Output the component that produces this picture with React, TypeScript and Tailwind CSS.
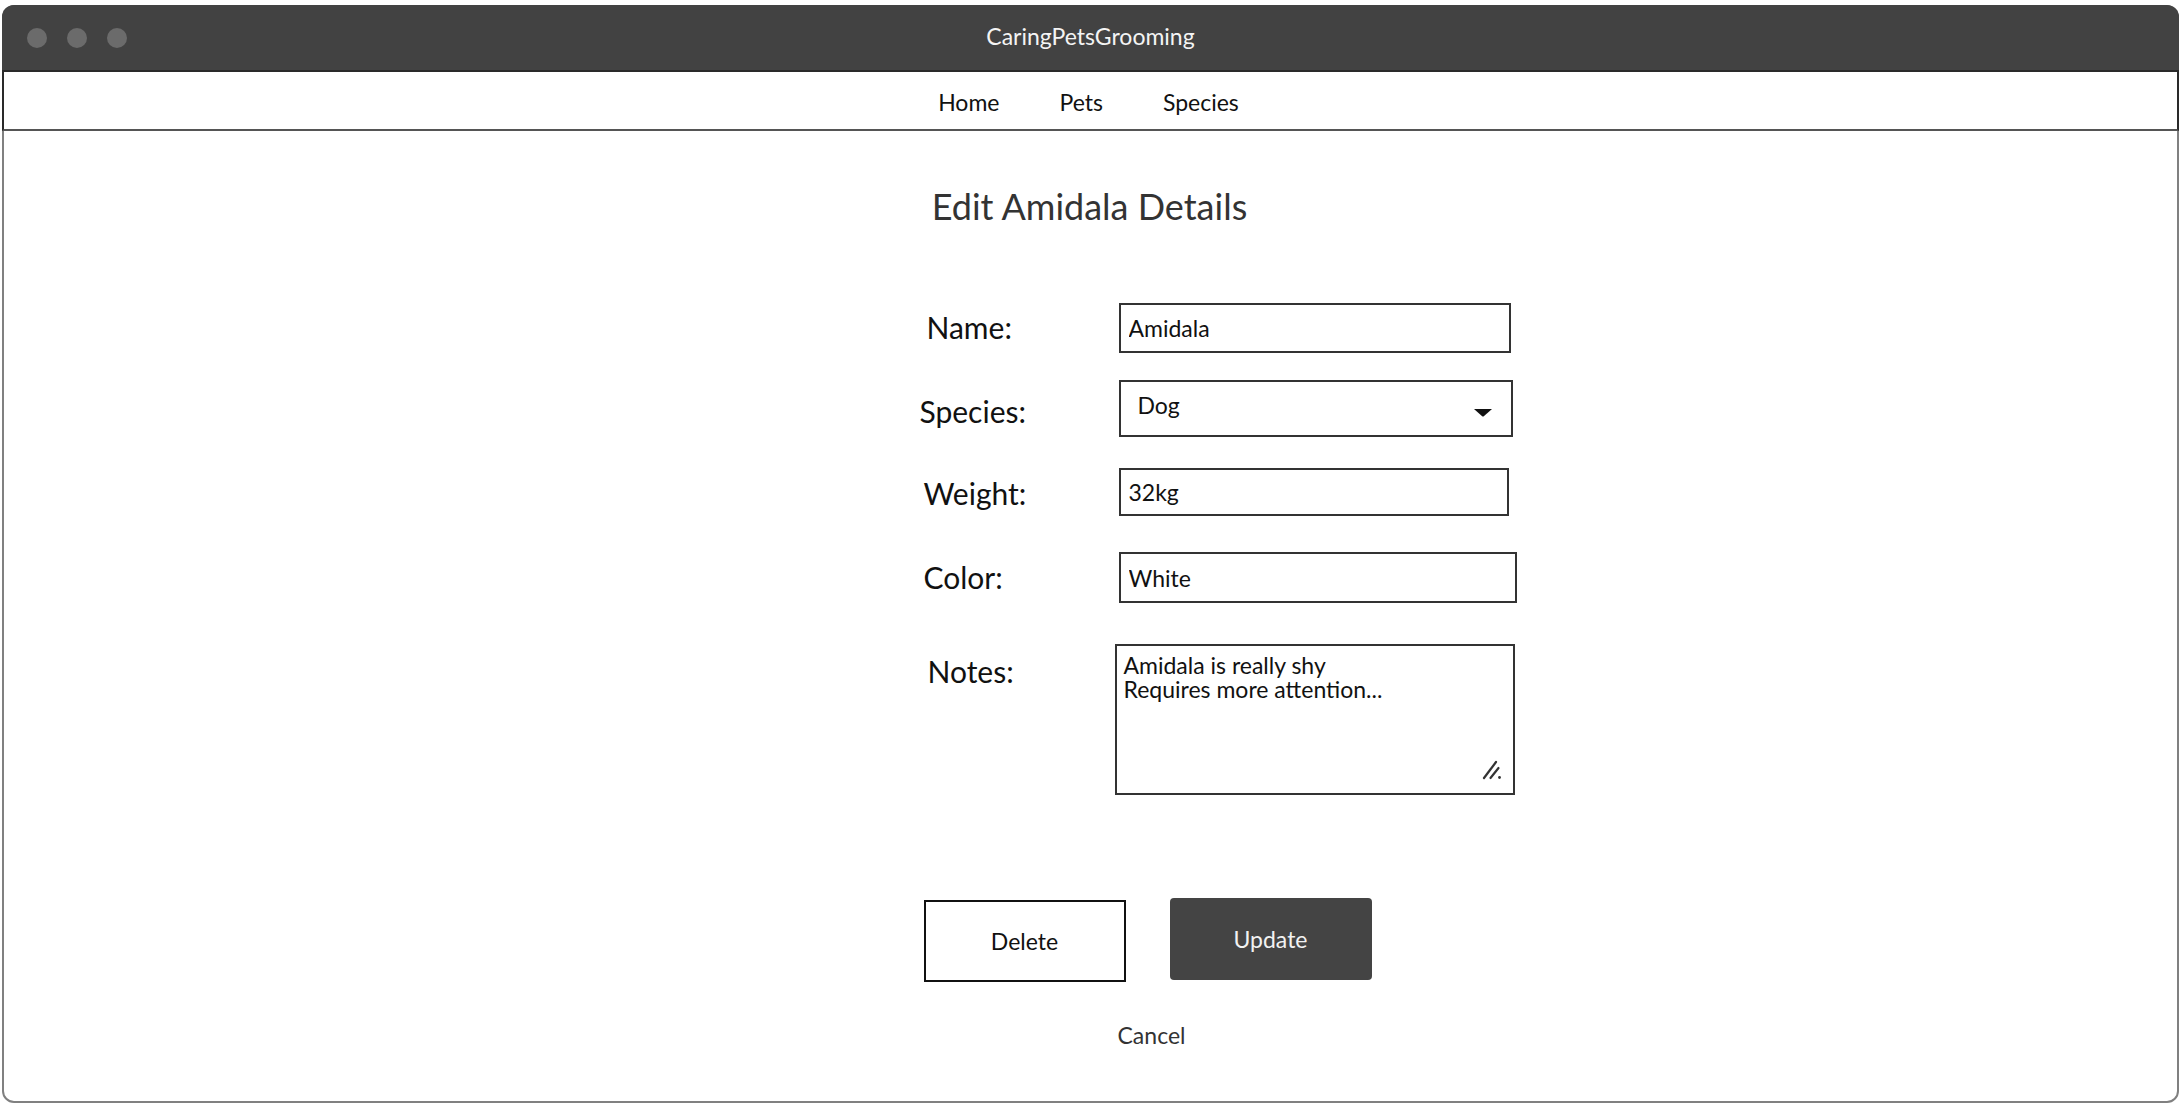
import React from 'react';

const sans = "font-['Lato','Open_Sans',sans-serif]";

const ResizeGrip = () => (
  <svg width="20" height="22" viewBox="0 0 20 22" className="absolute right-[13px] bottom-[15px] pointer-events-none">
    <line x1="2" y1="20" x2="14" y2="4" stroke="#333" strokeWidth="2.2" strokeLinecap="round" />
    <line x1="8.5" y1="20" x2="16.5" y2="10" stroke="#333" strokeWidth="2.2" strokeLinecap="round" />
    <circle cx="17.5" cy="19.5" r="1.4" fill="#333" />
  </svg>
);

const App: React.FC = () => {
  const rowLabel = `${sans} text-[30px] leading-[34px] text-[#111] w-[199px] shrink-0`;
  const field = `${sans} text-[23px] text-[#111] bg-white border-2 border-[#333] outline-none`;

  return (
    <div className="w-[2182px] h-[1106px] bg-white pt-[5px] pl-[2px]">
      <div className="w-[2177px] h-[1098px] border-2 border-[#808080] rounded-[12px] flex flex-col">
        {/* title bar */}
        <div className="-mx-[2px] -mt-[2px] h-[65px] rounded-t-[12px] bg-[#424242] grid grid-cols-[1fr_auto_1fr] items-center">
          <div className="flex items-center gap-[20px] pl-[25px]">
            <span className="w-[20px] h-[20px] rounded-full bg-[#6b6b6b]" />
            <span className="w-[20px] h-[20px] rounded-full bg-[#6b6b6b]" />
            <span className="w-[20px] h-[20px] rounded-full bg-[#6b6b6b]" />
          </div>
          <div className={`${sans} text-[23px] text-[#f4f4f4] -mt-[2px]`}>CaringPetsGrooming</div>
          <div />
        </div>

        {/* nav */}
        <nav className={`-mx-[2px] h-[61px] border-2 border-[#2a2a2a] border-b-[#555] flex items-center justify-center gap-[60px] pt-[3px] pr-[4px] ${sans} text-[23px] text-[#111]`}>
          <span>Home</span>
          <span>Pets</span>
          <span>Species</span>
        </nav>

        {/* content */}
        <div className="flex flex-col">
          <h1 className={`${sans} text-[36px] leading-[46px] text-[#333] text-center mt-[52px] -ml-[2px]`}>
            Edit Amidala Details
          </h1>

          <div className="w-[620px] ml-[calc(50%-171px)] flex flex-col">
            <div className="flex items-center mt-[74px]">
              <label className={`${rowLabel} pl-[7px] -mt-[2px]`}>Name:</label>
              <input readOnly defaultValue="Amidala" className={`${field} w-[392px] h-[50px] px-[8px]`} />
            </div>

            <div className="flex items-center mt-[27px]">
              <label className={`${rowLabel} pt-[4px]`}>Species:</label>
              <div className="relative">
                <select defaultValue="Dog" className={`${field} appearance-none w-[394px] h-[57px] pl-[17px] pb-[6px]`}>
                  <option>Dog</option>
                  <option>Cat</option>
                </select>
                <svg width="20" height="9" viewBox="0 0 20 9" className="absolute right-[20px] top-[28px] pointer-events-none">
                  <path d="M1 1 L19 1 L10.8 8.2 Q10 8.8 9.2 8.2 Z" fill="#111" />
                </svg>
              </div>
            </div>

            <div className="flex items-center mt-[31px]">
              <label className={`${rowLabel} pl-[4px] pt-[2px]`}>Weight:</label>
              <input readOnly defaultValue="32kg" className={`${field} w-[390px] h-[48px] px-[8px]`} />
            </div>

            <div className="flex items-center mt-[36px]">
              <label className={`${rowLabel} pl-[4px] -mt-[2px]`}>Color:</label>
              <input readOnly defaultValue="White" className={`${field} w-[398px] h-[51px] px-[8px]`} />
            </div>

            <div className="flex items-start mt-[41px]">
              <label className={`${rowLabel} pl-[8px] mt-[10px]`}>Notes:</label>
              <div className="relative -ml-[4px]">
                <textarea
                  readOnly
                  defaultValue={'Amidala is really shy\nRequires more attention...'}
                  className={`${field} block w-[400px] h-[151px] resize-none leading-[24px] pt-[7px] px-[7px]`}
                />
                <ResizeGrip />
              </div>
            </div>

            <div className="flex items-start gap-[44px] pl-[4px] mt-[103px]">
              <button className={`${sans} mt-[2px] w-[202px] h-[82px] border-2 border-[#111] bg-white text-[23px] text-[#111]`}>
                Delete
              </button>
              <button className={`${sans} w-[202px] h-[82px] rounded-[4px] bg-[#444] text-[23px] text-[#f2f2f2]`}>
                Update
              </button>
            </div>

            <div className="w-[452px] flex justify-center mt-[39px]">
              <span className={`${sans} text-[23px] leading-[28px] text-[#333] pl-[12px]`}>Cancel</span>
            </div>
          </div>
        </div>
      </div>
    </div>
  );
};

export default App;
